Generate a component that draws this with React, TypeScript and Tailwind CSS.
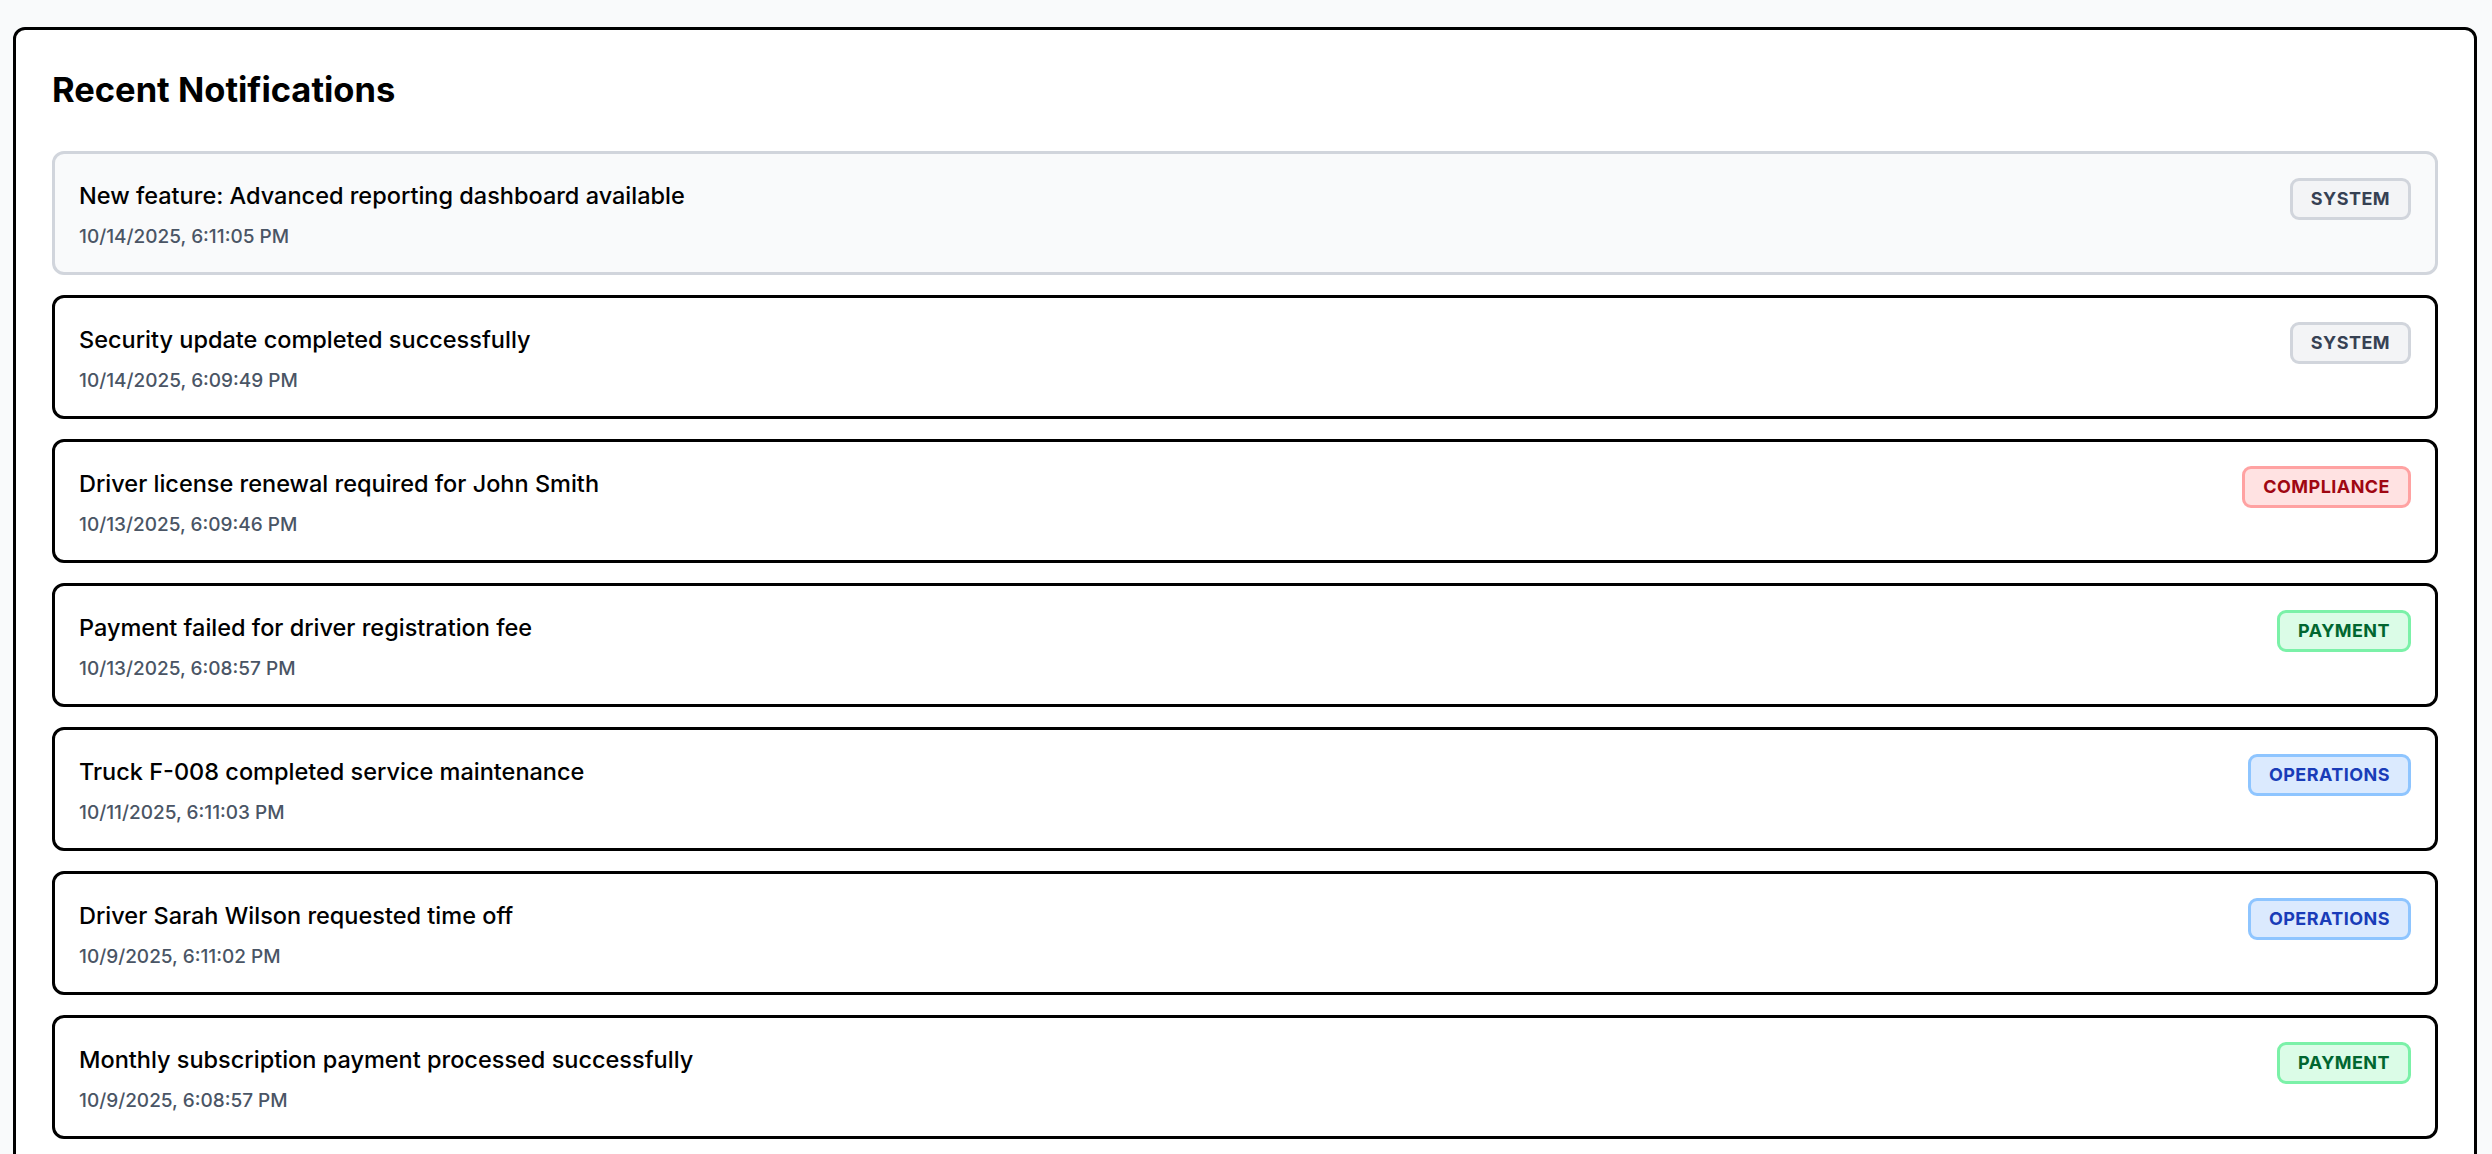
type Category = "system" | "compliance" | "payment" | "operations";

type Notification = {
  message: string;
  time: string;
  category: Category;
  read?: boolean;
};

const notifications: Notification[] = [
  { message: "New feature: Advanced reporting dashboard available", time: "10/14/2025, 6:11:05 PM", category: "system", read: true },
  { message: "Security update completed successfully", time: "10/14/2025, 6:09:49 PM", category: "system" },
  { message: "Driver license renewal required for John Smith", time: "10/13/2025, 6:09:46 PM", category: "compliance" },
  { message: "Payment failed for driver registration fee", time: "10/13/2025, 6:08:57 PM", category: "payment" },
  { message: "Truck F-008 completed service maintenance", time: "10/11/2025, 6:11:03 PM", category: "operations" },
  { message: "Driver Sarah Wilson requested time off", time: "10/9/2025, 6:11:02 PM", category: "operations" },
  { message: "Monthly subscription payment processed successfully", time: "10/9/2025, 6:08:57 PM", category: "payment" },
];

const badgeStyles: Record<Category, string> = {
  system: "bg-gray-100 border-gray-300 text-gray-700",
  compliance: "bg-red-100 border-red-300 text-red-800",
  payment: "bg-green-100 border-green-300 text-green-800",
  operations: "bg-blue-100 border-blue-300 text-blue-800",
};

function Badge({ category }: { category: Category }) {
  return (
    <span
      className={`shrink-0 rounded-[9px] border-[3px] px-[18px] py-[6px] text-[18px] leading-[24px] font-bold uppercase tracking-wide ${badgeStyles[category]}`}
    >
      {category}
    </span>
  );
}

function NotificationRow({ item }: { item: Notification }) {
  return (
    <div
      className={`flex items-start justify-between gap-6 rounded-[12px] border-[3px] px-[24px] pt-[24px] pb-[23px] ${
        item.read ? "bg-gray-50 border-gray-300" : "bg-white border-black"
      }`}
    >
      <div className="flex flex-col">
        <p className="text-[23.5px] leading-[36px] font-medium text-black">{item.message}</p>
        <p className="mt-[11px] text-[19px] leading-[24px] font-medium text-gray-600">{item.time}</p>
      </div>
      <Badge category={item.category} />
    </div>
  );
}

export default function App() {
  return (
    <div
      className="min-h-screen bg-gray-50 pl-[13px] pr-[15px] pt-[27px]"
      style={{ fontFamily: "Inter, 'Noto Sans', sans-serif" }}
    >
      <div className="rounded-[12px] border-[3px] border-black bg-white p-[36px]">
        <h2 className="mb-[37px] text-[34.5px] leading-[48px] font-bold text-black">Recent Notifications</h2>
        <div className="flex flex-col gap-[20px]">
          {notifications.map((n, i) => (
            <NotificationRow key={i} item={n} />
          ))}
        </div>
      </div>
    </div>
  );
}
